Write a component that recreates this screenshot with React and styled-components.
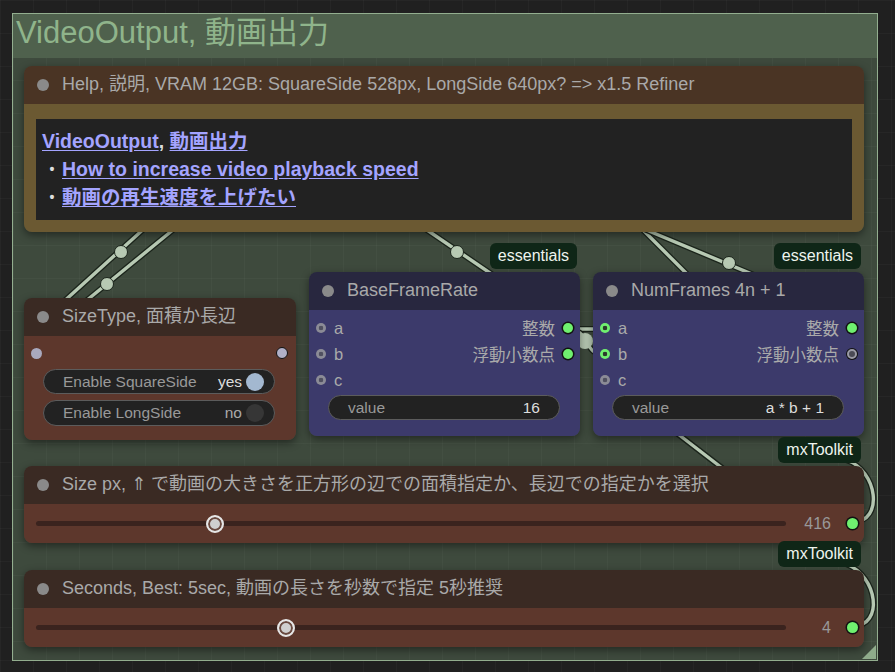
import React from 'react';
import styled, { createGlobalStyle, css } from 'styled-components';

const FONT = '"Liberation Sans", Arial, "Noto Sans CJK JP", "DejaVu Sans", sans-serif';

const GlobalStyle = createGlobalStyle`
  html, body { margin: 0; padding: 0; background: #202020; overflow: hidden; }
  body { font-family: ${FONT}; }
  * { box-sizing: border-box; }
`;

const grid = css`
  background-image:
    linear-gradient(rgba(255,255,255,0.028) 1px, transparent 1px),
    linear-gradient(90deg, rgba(255,255,255,0.028) 1px, transparent 1px);
  background-size: 33px 33px;
`;

const Canvas = styled.div`
  width: 895px;
  height: 672px;
  padding: 13px 0 0 12px;
  background-color: #202020;
  ${grid}
`;

const Group = styled.section`
  position: relative;
  width: 866px;
  height: 648px;
  border: 1px solid #93ae8f;
  background-color: #3e4a3d;
  ${grid}
  display: flex;
  flex-direction: column;
`;

const GroupTitle = styled.h1`
  margin: 0;
  height: 44px;
  flex: none;
  padding-left: 3px;
  background: #4f614d;
  color: #8fb48b;
  font-family: ${FONT};
  font-weight: normal;
  font-size: 31px;
  line-height: 38px;
  white-space: nowrap;
`;

const GroupBody = styled.div`
  flex: 1;
  padding: 8px 13px 0 11px;
  display: flex;
  flex-direction: column;
`;

const Wires = styled.svg`
  position: absolute;
  left: 0;
  top: 0;
  z-index: 0;
  pointer-events: none;
`;

const Resize = styled.svg`
  position: absolute;
  right: 1px;
  bottom: 1px;
  z-index: 2;
`;

const tones = {
  help: { title: '#4a3424', body: '#6b5932' },
  brown: { title: '#3a2a23', body: '#5d372c' },
  blue: { title: '#28273f', body: '#3c3a6b' },
};

const Node = styled.div`
  position: relative;
  z-index: 1;
  width: ${(p) => p.$w || 840}px;
  margin-top: ${(p) => p.$mt || 0}px;
  flex: none;
  border-radius: 8px;
  box-shadow: 0 3px 8px rgba(0, 0, 0, 0.45);
`;

const NodeTitle = styled.div`
  height: 38px;
  display: flex;
  align-items: center;
  gap: 13px;
  padding: 0 0 3px 13px;
  background: ${(p) => tones[p.$tone].title};
  border-radius: 8px 8px 0 0;
  color: #a9a9a9;
  font-size: 18px;
  line-height: 22px;
  white-space: nowrap;
`;

const TitleDot = styled.span`
  width: 12px;
  height: 12px;
  margin-top: 2px;
  border-radius: 50%;
  background: #8a8a8a;
  flex: none;
`;

const NodeBody = styled.div`
  background: ${(p) => tones[p.$tone].body};
  border-radius: 0 0 8px 8px;
  padding: ${(p) => p.$pad || '0'};
`;

const Badge = styled.div`
  position: absolute;
  right: 3px;
  top: -29px;
  height: 26px;
  padding: 0 8px;
  border-radius: 6px;
  background: #0f2617;
  color: #eef4ee;
  font-size: 16px;
  line-height: 26px;
  white-space: nowrap;
`;

/* Help node */
const HelpBox = styled.div`
  background: #222;
  padding: 8px 6px 9px;
  font-size: 19.5px;
  font-weight: bold;
  line-height: 28px;
  color: #ddd;
`;

const Link = styled.a`
  color: #a4a4ff;
  text-decoration: underline;
  text-underline-offset: 2px;
`;

const BulletList = styled.ul`
  list-style: none;
  margin: 0;
  padding: 0;
`;

const BulletItem = styled.li`
  display: flex;
  &::before {
    content: '•';
    width: 20px;
    text-align: center;
    color: #ddd;
    font-size: 14px;
  }
`;

/* slots */
const slotKinds = {
  inGray: css`background: radial-gradient(circle, #505060 0 2px, #8b8b96 2.6px);`,
  inGreen: css`background: radial-gradient(circle, #2c3a2c 0 2px, #6ff06f 2.6px);`,
  outGreen: css`background: #6ff06f; box-shadow: 0 0 0 1.5px #121212;`,
  outHollow: css`background: #4a4a55; border: 2px solid #9a9aa5; box-shadow: 0 0 0 1px #111;`,
  plainIn: css`background: #a9a9be;`,
  plainOut: css`background: #b0b0c8; border: 1.5px solid #111;`,
};

const Slot = styled.span`
  width: ${(p) => p.$size || 10}px;
  height: ${(p) => p.$size || 10}px;
  border-radius: 50%;
  flex: none;
  ${(p) => slotKinds[p.$kind]}
`;

const SlotRow = styled.div`
  height: 26px;
  display: flex;
  align-items: center;
  justify-content: space-between;
  padding: 0 7px;
  font-size: 16.5px;
  color: #aaa;
`;

const SlotSide = styled.span`
  display: flex;
  align-items: center;
  gap: 8px;
`;

/* widgets */
const Widget = styled.div`
  height: ${(p) => p.$h || 25}px;
  margin: ${(p) => p.$m || '0'};
  display: flex;
  align-items: center;
  padding: 0 ${(p) => p.$pr || 19}px 0 19px;
  background: #222;
  border: 1px solid #5c5c5c;
  border-radius: 14px;
  font-size: 15.5px;
  color: #999;
  white-space: nowrap;
`;

const WidgetLabel = styled.span`
  flex: 1;
`;

const WidgetValue = styled.span`
  color: ${(p) => (p.$dim ? '#aaa' : '#ddd')};
`;

const Knob = styled.span`
  width: 18px;
  height: 18px;
  margin-left: 4px;
  border-radius: 50%;
  background: ${(p) => (p.$on ? '#a3b8d0' : '#363636')};
`;

/* slider */
const SliderRow = styled.div`
  height: 39px;
  display: flex;
  align-items: center;
  padding: 0 6px 0 12px;
`;

const Track = styled.div`
  position: relative;
  flex: 1;
  height: 5px;
  border-radius: 3px;
  background: #3a231e;
`;

const Thumb = styled.span`
  position: absolute;
  top: 50%;
  width: 18px;
  height: 18px;
  margin: -9px 0 0 -9px;
  border-radius: 50%;
  background: #cfcfcf;
  border: 2px solid #e6e6e6;
  box-shadow: inset 0 0 0 2px #6a4a40;
`;

const SliderValue = styled.span`
  width: 45px;
  text-align: right;
  margin-right: 16px;
  color: #999;
  font-size: 16px;
`;

const Row = styled.div`
  display: flex;
  gap: 13px;
  align-items: flex-start;
  margin-top: 40px;
`;

function MathNode({ title, inA, inB, outFloat, value }) {
  return (
    <Node $w={271}>
      <Badge>essentials</Badge>
      <NodeTitle $tone="blue">
        <TitleDot />
        {title}
      </NodeTitle>
      <NodeBody $tone="blue" $pad="5px 0 16px">
        <SlotRow>
          <SlotSide><Slot $kind={inA} />a</SlotSide>
          <SlotSide>整数<Slot $kind="outGreen" /></SlotSide>
        </SlotRow>
        <SlotRow>
          <SlotSide><Slot $kind={inB} />b</SlotSide>
          <SlotSide>浮動小数点<Slot $kind={outFloat} /></SlotSide>
        </SlotRow>
        <SlotRow>
          <SlotSide><Slot $kind="inGray" />c</SlotSide>
        </SlotRow>
        <Widget $m="2px 20px 0 19px" $pr={19}>
          <WidgetLabel>value</WidgetLabel>
          <WidgetValue>{value}</WidgetValue>
        </Widget>
      </NodeBody>
    </Node>
  );
}

function SliderNode({ title, pct, value, mt }) {
  return (
    <Node $mt={mt}>
      <Badge>mxToolkit</Badge>
      <NodeTitle $tone="brown">
        <TitleDot />
        {title}
      </NodeTitle>
      <NodeBody $tone="brown">
        <SliderRow>
          <Track>
            <Thumb style={{ left: `${pct}%` }} />
          </Track>
          <SliderValue>{value}</SliderValue>
          <Slot $kind="outGreen" $size={11} />
        </SliderRow>
      </NodeBody>
    </Node>
  );
}

function Wire({ d }) {
  return (
    <g>
      <path d={d} fill="none" stroke="#1b241b" strokeWidth="6" strokeLinecap="round" />
      <path d={d} fill="none" stroke="#b7c9b3" strokeWidth="3.4" strokeLinecap="round" />
    </g>
  );
}

function Dot({ x, y }) {
  return <circle cx={x} cy={y} r="6.5" fill="#b7c9b3" stroke="#1b241b" strokeWidth="1" />;
}

export default function App() {
  return (
    <>
      <GlobalStyle />
      <Canvas>
        <Group>
          <Wires width="864" height="646" viewBox="13 14 864 646">
            <Wire d="M158 216 L50 314" />
            <Wire d="M190 216 L70 314" />
            <Dot x={121} y={252} />
            <Dot x={107} y={284} />
            <Wire d="M405 215 L515 290" />
            <Dot x={457} y={252} />
            <Wire d="M625 212 L705 292" />
            <Wire d="M625 221 L790 290" />
            <Dot x={729} y={263} />
            <Wire d="M665 424 L735 478" />
            <Wire d="M568 329 C588 329, 585 329, 605 329" />
            <Wire d="M568 329 C590 329, 583 355, 605 355" />
            <circle cx="585" cy="341" r="8" fill="#b7c9b3" />
            <Wire d="M853 522 C884 522, 878 470, 846 460" />
            <Wire d="M853 626 C884 626, 878 576, 846 564" />
          </Wires>
          <GroupTitle>VideoOutput, 動画出力</GroupTitle>
          <GroupBody>
            <Node>
              <NodeTitle $tone="help">
                <TitleDot />
                Help, 説明, VRAM 12GB: SquareSide 528px, LongSide 640px? =&gt; x1.5 Refiner
              </NodeTitle>
              <NodeBody $tone="help" $pad="15px 12px 12px">
                <HelpBox>
                  <div>
                    <Link>VideoOutput</Link>, <Link>動画出力</Link>
                  </div>
                  <BulletList>
                    <BulletItem><Link>How to increase video playback speed</Link></BulletItem>
                    <BulletItem><Link>動画の再生速度を上げたい</Link></BulletItem>
                  </BulletList>
                </HelpBox>
              </NodeBody>
            </Node>

            <Row>
              <Node $w={272} $mt={26}>
                <NodeTitle $tone="brown">
                  <TitleDot />
                  SizeType, 面積か長辺
                </NodeTitle>
                <NodeBody $tone="brown" $pad="4px 0 14px">
                  <SlotRow style={{ paddingRight: 8 }}>
                    <Slot $kind="plainIn" $size={11} />
                    <Slot $kind="plainOut" $size={12} />
                  </SlotRow>
                  <Widget $m="3px 21px 0 19px" $pr={10}>
                    <WidgetLabel>Enable SquareSide</WidgetLabel>
                    <WidgetValue>yes</WidgetValue>
                    <Knob $on />
                  </Widget>
                  <Widget $m="6px 21px 0 19px" $pr={10} $h={26}>
                    <WidgetLabel>Enable LongSide</WidgetLabel>
                    <WidgetValue $dim>no</WidgetValue>
                    <Knob />
                  </Widget>
                </NodeBody>
              </Node>
              <MathNode title="BaseFrameRate" inA="inGray" inB="inGray" outFloat="outGreen" value="16" />
              <MathNode title="NumFrames 4n + 1" inA="inGreen" inB="inGreen" outFloat="outHollow" value="a * b + 1" />
            </Row>

            <SliderNode
              mt={26}
              pct={23.9}
              value="416"
              title="Size px, ⇑ で動画の大きさを正方形の辺での面積指定か、長辺での指定かを選択"
            />
            <SliderNode
              mt={27}
              pct={33.3}
              value="4"
              title="Seconds, Best: 5sec, 動画の長さを秒数で指定 5秒推奨"
            />
          </GroupBody>
          <Resize width="14" height="14" viewBox="0 0 14 14">
            <polygon points="14,0 14,14 0,14" fill="#8fab8b" />
          </Resize>
        </Group>
      </Canvas>
    </>
  );
}
